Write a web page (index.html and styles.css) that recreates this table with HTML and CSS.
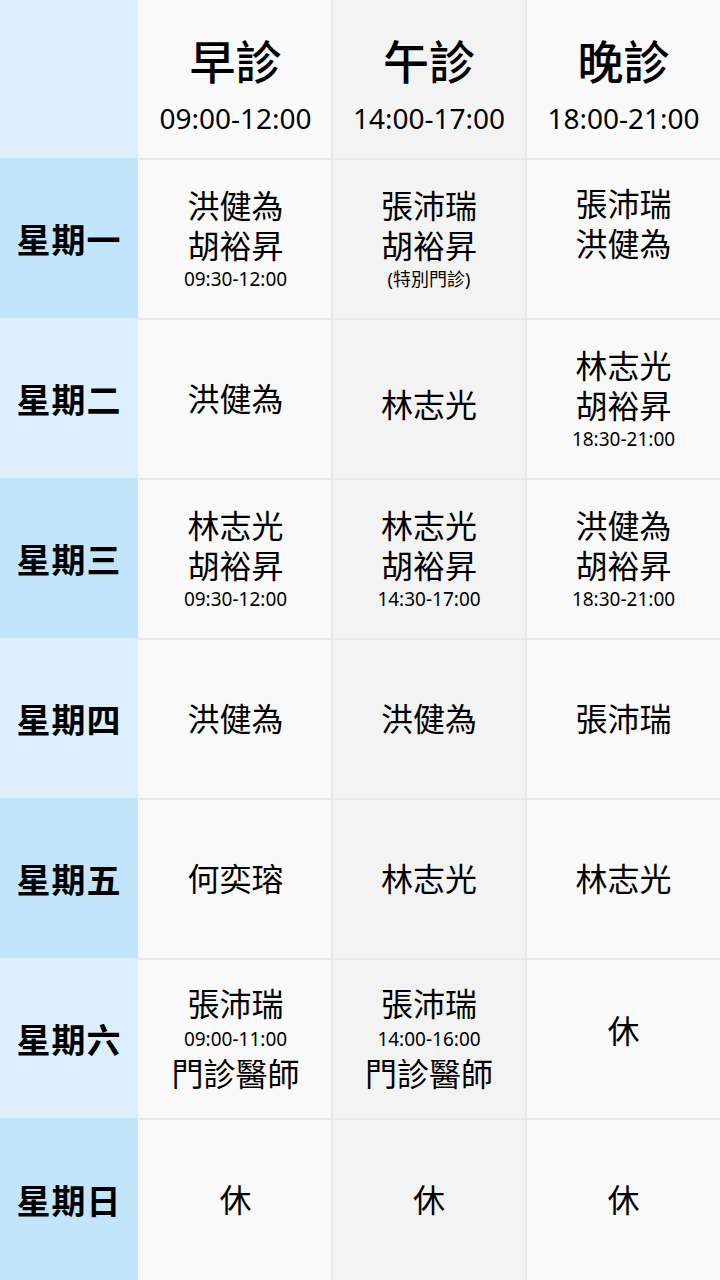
FILE: index.html
```html
<!DOCTYPE html>
<html lang="zh-Hant">
<head>
  <meta charset="UTF-8" />
  <meta name="viewport" content="width=device-width, initial-scale=1.0"/>
  <title>門診時間表</title>
  <link rel="stylesheet" href="styles.css">
</head>
<body>

  <div class="schedule">
    <!-- Header row -->
    <div class="day day-light"></div>
    <div class="cell head">
      <span class="session">早診</span>
      <span class="head-time">09:00-12:00</span>
    </div>
    <div class="cell head mid">
      <span class="session">午診</span>
      <span class="head-time">14:00-17:00</span>
    </div>
    <div class="cell head">
      <span class="session">晚診</span>
      <span class="head-time">18:00-21:00</span>
    </div>

    <!-- Monday -->
    <div class="day day-dark">星期一</div>
    <div class="cell row">
      <span class="name">洪健為</span>
      <span class="name">胡裕昇</span>
      <span class="time">09:30-12:00</span>
    </div>
    <div class="cell row mid">
      <span class="name">張沛瑞</span>
      <span class="name">胡裕昇</span>
      <span class="note">(特別門診)</span>
    </div>
    <div class="cell row top">
      <span class="name">張沛瑞</span>
      <span class="name">洪健為</span>
    </div>

    <!-- Tuesday -->
    <div class="day day-light">星期二</div>
    <div class="cell row">
      <span class="name">洪健為</span>
    </div>
    <div class="cell row mid">
      <span class="name low">林志光</span>
    </div>
    <div class="cell row">
      <span class="name">林志光</span>
      <span class="name">胡裕昇</span>
      <span class="time">18:30-21:00</span>
    </div>

    <!-- Wednesday -->
    <div class="day day-dark">星期三</div>
    <div class="cell row">
      <span class="name">林志光</span>
      <span class="name">胡裕昇</span>
      <span class="time">09:30-12:00</span>
    </div>
    <div class="cell row mid">
      <span class="name">林志光</span>
      <span class="name">胡裕昇</span>
      <span class="time">14:30-17:00</span>
    </div>
    <div class="cell row">
      <span class="name">洪健為</span>
      <span class="name">胡裕昇</span>
      <span class="time">18:30-21:00</span>
    </div>

    <!-- Thursday -->
    <div class="day day-light">星期四</div>
    <div class="cell row">
      <span class="name">洪健為</span>
    </div>
    <div class="cell row mid">
      <span class="name">洪健為</span>
    </div>
    <div class="cell row">
      <span class="name">張沛瑞</span>
    </div>

    <!-- Friday -->
    <div class="day day-dark">星期五</div>
    <div class="cell row">
      <span class="name">何奕瑢</span>
    </div>
    <div class="cell row mid">
      <span class="name">林志光</span>
    </div>
    <div class="cell row">
      <span class="name">林志光</span>
    </div>

    <!-- Saturday -->
    <div class="day day-light">星期六</div>
    <div class="cell row">
      <span class="name">張沛瑞</span>
      <span class="time between">09:00-11:00</span>
      <span class="name">門診醫師</span>
    </div>
    <div class="cell row mid">
      <span class="name">張沛瑞</span>
      <span class="time between">14:00-16:00</span>
      <span class="name">門診醫師</span>
    </div>
    <div class="cell row">
      <span class="name high">休</span>
    </div>

    <!-- Sunday -->
    <div class="day day-dark">星期日</div>
    <div class="cell row">
      <span class="name">休</span>
    </div>
    <div class="cell row mid">
      <span class="name">休</span>
    </div>
    <div class="cell row">
      <span class="name">休</span>
    </div>
  </div>

</body>
</html>
```

FILE: styles.css
```css
body {
  margin: 0;
  font-family: "Noto Sans", "Noto Sans CJK TC", sans-serif;
  background-color: #f9f9f9;
  color: #000;
}

.schedule {
  display: grid;
  grid-template-columns: 138px 193px 194px 195px;
  grid-template-rows: 158px repeat(6, 160px) 162px;
  width: 720px;
}

/* Weekday column */
.day {
  display: flex;
  align-items: center;
  justify-content: center;
  font-size: 34px;
  font-weight: bold;
  letter-spacing: 1px;
}

.day-light {
  background-color: #ddeffd;
}

.day-dark {
  background-color: #c3e5fc;
}

/* Schedule cells */
.cell {
  display: flex;
  flex-direction: column;
  align-items: center;
  justify-content: center;
  background-color: #f9f9f9;
  border-left: 2px solid #e8e8e8;
  box-sizing: border-box;
}

.cell:nth-child(4n+2) {
  border-left-color: #f4f6f8;
}

.cell.mid {
  background-color: #f3f3f3;
}

.cell.row {
  border-top: 2px solid #e8e8e8;
}

.head {
  padding-top: 12px;
}

.session {
  font-size: 46px;
  font-weight: 500;
  line-height: 58px;
}

.head-time {
  margin-top: 8px;
  font-size: 28px;
  line-height: 40px;
}

.name {
  font-size: 32px;
  line-height: 40px;
}

.name.low {
  margin-top: 12px;
}

.name.high {
  margin-bottom: 16px;
}

.time {
  font-size: 19px;
  line-height: 26px;
}

/* time squeezed between two name lines (Saturday) */
.time.between {
  line-height: 30px;
}

.note {
  font-size: 18px;
  line-height: 26px;
}

.top {
  justify-content: flex-start;
  padding-top: 24px;
}
```
